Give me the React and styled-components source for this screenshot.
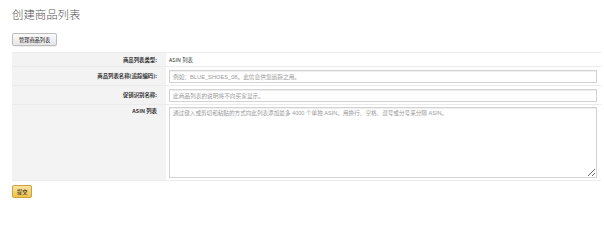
import React from "react";
import styled, { createGlobalStyle } from "styled-components";

const GlobalStyle = createGlobalStyle`
  body {
    margin: 0;
    background: #fff;
    font-family: "Liberation Sans", "Noto Sans CJK SC", sans-serif;
    color: #333;
  }
`;

const Page = styled.div`
  padding: 6px 3px 0 12px;
`;

const Title = styled.h1`
  margin: 0;
  font-family: "Noto Sans CJK SC", sans-serif;
  font-weight: 300;
  font-size: 11.4px;
  line-height: 16px;
  color: #555;
`;

const SmallButton = styled.button`
  display: block;
  box-sizing: border-box;
  height: 13px;
  padding: 0 ${(p) => (p.$primary ? "4px" : "6px")};
  font-family: "Noto Sans CJK SC", sans-serif;
  font-size: 5.2px;
  line-height: 11px;
  color: #111;
  border-radius: 2px;
  cursor: pointer;
  border: 1px solid ${(p) => (p.$primary ? "#c9a43b" : "#bcbcbc")};
  background: ${(p) =>
    p.$primary
      ? "linear-gradient(#f8e3a0, #f0c14b)"
      : "linear-gradient(#fafafa, #e6e6e6)"};
  box-shadow: 0 1px 0 rgba(0, 0, 0, 0.06);
`;

const Toolbar = styled.div`
  margin-top: 11px;
`;

const FormTable = styled.div`
  margin-top: 6px;
  border-bottom: 1px solid #ececec;
`;

const Row = styled.div`
  display: grid;
  grid-template-columns: 154px 1fr;
  border-top: 1px solid #ebebeb;
`;

const Label = styled.div`
  background: #f3f3f3;
  text-align: right;
  padding: ${(p) => p.$top}px 9px 0 0;
  font-family: "Noto Sans CJK SC", sans-serif;
  font-weight: 700;
  font-size: 5.4px;
  line-height: 6px;
  color: #333;
  white-space: nowrap;
`;

const Field = styled.div`
  padding: ${(p) => p.$pad};
  font-family: "Noto Sans CJK SC", sans-serif;
  font-size: 5.4px;
  line-height: 6px;
  color: #333;
`;

const TextInput = styled.input`
  display: block;
  box-sizing: border-box;
  width: 100%;
  height: 13px;
  margin: 0;
  padding: 0 3px;
  border: 1px solid #d3d3d3;
  box-shadow: inset 0 1px 1px rgba(0, 0, 0, 0.07);
  font-family: "Liberation Sans", "Noto Sans CJK SC", sans-serif;
  font-size: 5.7px;
  outline: none;
  &::placeholder {
    color: #999;
  }
`;

const TextArea = styled.textarea`
  display: block;
  box-sizing: border-box;
  width: 100%;
  height: 71px;
  margin: 0;
  padding: 2px 3px;
  border: 1px solid #d3d3d3;
  box-shadow: inset 0 1px 1px rgba(0, 0, 0, 0.07);
  font-family: "Liberation Sans", "Noto Sans CJK SC", sans-serif;
  font-size: 5.6px;
  line-height: 7px;
  outline: none;
  &::placeholder {
    color: #999;
  }
`;

const Footer = styled.div`
  margin-top: 4px;
`;

export default function App() {
  return (
    <>
      <GlobalStyle />
      <Page>
        <Title>创建商品列表</Title>
        <Toolbar>
          <SmallButton>管理商品列表</SmallButton>
        </Toolbar>
        <FormTable>
          <Row>
            <Label $top={4}>商品列表类型:</Label>
            <Field $pad="4px 7px 3px 3px">ASIN 列表</Field>
          </Row>
          <Row>
            <Label $top={6}>商品列表名称(追踪编码):</Label>
            <Field $pad="3px 4px 2px 3px">
              <TextInput placeholder="例如：BLUE_SHOES_08。此信息供您追踪之用。" />
            </Field>
          </Row>
          <Row>
            <Label $top={6}>促销识别名称:</Label>
            <Field $pad="3px 4px 2px 3px">
              <TextInput placeholder="此商品列表的说明将不向买家显示。" />
            </Field>
          </Row>
          <Row>
            <Label $top={3}>ASIN 列表</Label>
            <Field $pad="2px 4px 2px 3px">
              <TextArea placeholder="通过键入或剪切和粘贴的方式向此列表添加最多 4000 个单独 ASIN。用换行、空格、逗号或分号来分隔 ASIN。" />
            </Field>
          </Row>
        </FormTable>
        <Footer>
          <SmallButton $primary>提交</SmallButton>
        </Footer>
      </Page>
    </>
  );
}
